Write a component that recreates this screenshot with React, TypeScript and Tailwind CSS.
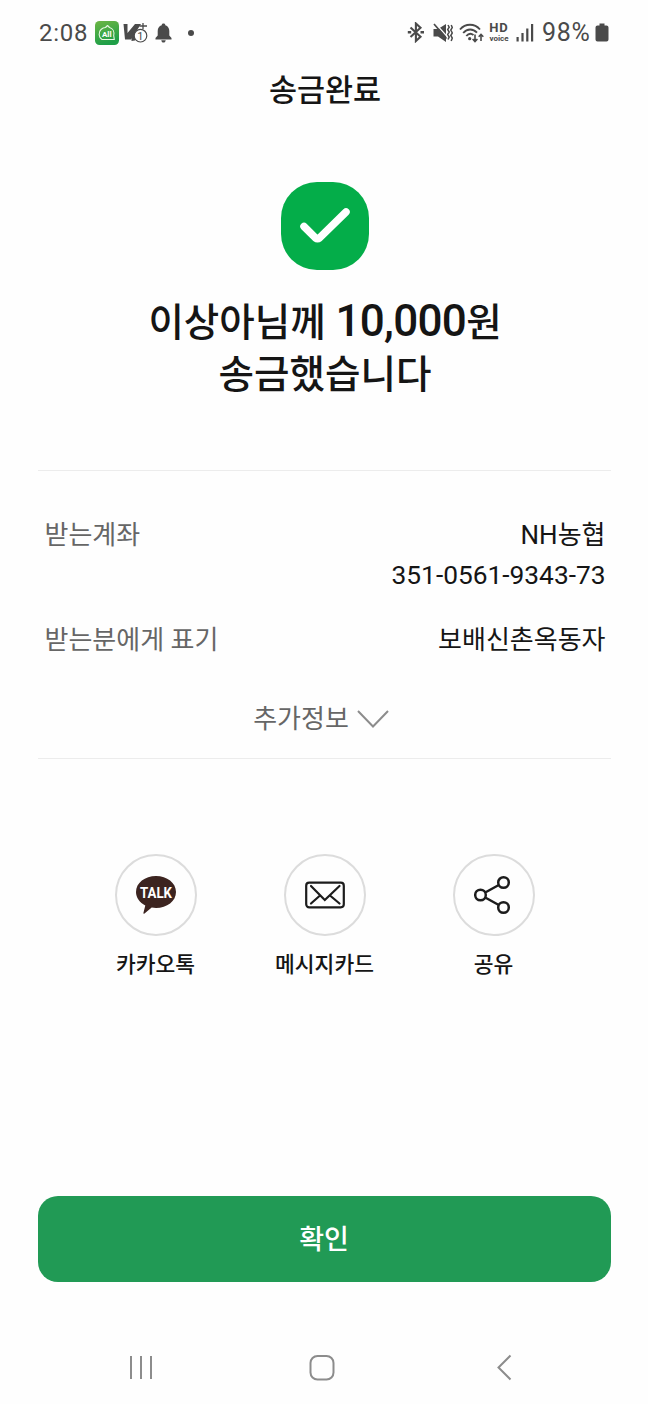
import type { ReactNode } from 'react'

function AllOneIcon() {
  return (
    <svg width="24" height="24" viewBox="0 0 24 24">
      <defs>
        <linearGradient id="allone" x1="0" y1="0" x2="0.3" y2="1">
          <stop offset="0" stopColor="#6db644" />
          <stop offset="1" stopColor="#1f9f48" />
        </linearGradient>
      </defs>
      <rect width="24" height="24" rx="4.5" fill="url(#allone)" />
      <path
        d="M7 18.500C3.500 16.500 3.300 11 6 8.500C7.500 7 9.500 6.500 10.500 6.500L12.500 4.500L14.500 6.500C18 7.500 19.500 11 18.700 14.500L19.300 18.500Z"
        fill="none"
        stroke="#eaf7e4"
        strokeWidth="1.1"
        strokeLinejoin="round"
      />
      <text
        x="11.800"
        y="15.500"
        textAnchor="middle"
        fill="#fff"
        fontSize="8"
        fontWeight="700"
        fontFamily="Roboto, sans-serif"
      >
        All
      </text>
    </svg>
  )
}

function VaccineIcon() {
  return (
    <svg width="25" height="24" viewBox="0 0 25 24" fill="#4a4a4a">
      <path d="M0.500 3H4.500V12L12 3H18L8 18.500H2Z" />
      <path d="M8.500 13L12 10.500V19.500L8.500 20Z" />
      <path d="M20 2V8M16.500 5H24" stroke="#4a4a4a" strokeWidth="1.300" />
      <circle cx="17.500" cy="14.700" r="6.300" fill="#fff" stroke="#4a4a4a" strokeWidth="1.200" />
      <text
        x="17.300"
        y="18.700"
        textAnchor="middle"
        fontSize="11"
        fontFamily="Roboto, sans-serif"
      >
        1
      </text>
    </svg>
  )
}

function BellIcon() {
  return (
    <svg width="17" height="20" viewBox="0 0 17 20" fill="#4a4a4a">
      <path d="M8.500 0.500C9.600 0.500 10.300 1.200 10.300 2.200C13 3 14.300 5.200 14.300 8V12.500L16.500 15V16.500H0.500V15L2.700 12.500V8C2.700 5.200 4 3 6.700 2.200C6.700 1.200 7.400 0.500 8.500 0.500ZM6.300 17.200H10.700C10.500 18.700 9.700 19.500 8.500 19.500S6.500 18.700 6.300 17.200Z" />
    </svg>
  )
}

function BluetoothIcon() {
  return (
    <svg width="18" height="21" viewBox="0 0 18 21" fill="none" stroke="#4a4a4a" strokeWidth="2.100">
      <path d="M3.500 5.500L13.500 14.800L8.900 19V1.500L13.500 5.700L3.500 15" />
      <path d="M0.800 10.300H4.200M13.500 10.300H17" strokeWidth="2.400" />
    </svg>
  )
}

function VibrateIcon() {
  return (
    <svg width="20" height="20" viewBox="0 0 20 20" fill="#4a4a4a">
      <path d="M0.500 6H5L13 1V19L5 13.500H0.500Z" />
      <path d="M2.500 0.500L14.500 14" stroke="#fefefe" strokeWidth="1.200" />
      <path d="M1 1L13.500 15.500" stroke="#4a4a4a" strokeWidth="1.700" />
      <path
        d="M15 2L16.200 4.200L14.700 6.500L16.200 9L14.700 11.500L16.200 14L15 16.500M18.200 2L19.300 4.500L17.800 7L19.300 10L17.800 12.500L19.300 15L18.200 18"
        fill="none"
        stroke="#4a4a4a"
        strokeWidth="1.500"
      />
    </svg>
  )
}

function WifiIcon() {
  return (
    <svg width="25" height="20" viewBox="0 0 25 20" fill="none" stroke="#4a4a4a">
      <path
        d="M1 6.500C6.500 0.200 15.500 0.200 21 6.500M4.200 10C8.200 5.300 14 5.300 18 9.700M7.300 13C9.500 10.400 12.200 10.200 14.500 12"
        strokeWidth="1.900"
      />
      <circle cx="10.700" cy="15.700" r="1.600" fill="#4a4a4a" stroke="none" />
      <path
        d="M16 11.500V18.500M13.600 16L16 18.500L18.400 16M22 18V11.300M19.700 13.700L22 11.300L24.300 13.700"
        strokeWidth="1.600"
      />
    </svg>
  )
}

function SignalIcon() {
  return (
    <svg width="18" height="19" viewBox="0 0 18 19" fill="#4a4a4a">
      <rect x="0.500" y="14" width="2.200" height="4.500" />
      <rect x="5.400" y="10" width="2.200" height="8.500" />
      <rect x="10.200" y="5.500" width="2.200" height="13" />
      <rect x="15" y="1" width="2.200" height="17.500" />
    </svg>
  )
}

function BatteryIcon() {
  return (
    <svg width="14" height="19" viewBox="0 0 14 19" fill="#4a4a4a">
      <path d="M4.500 0.500H9.500V2.500H11.500Q13.500 2.500 13.500 4.500V16.500Q13.500 18.500 11.500 18.500H2.500Q0.500 18.500 0.500 16.500V4.500Q0.500 2.500 2.500 2.500H4.500Z" />
    </svg>
  )
}

function StatusBar() {
  return (
    <div className="flex h-[65px] w-full shrink-0 items-center justify-between pr-[39px] pl-[39px] text-[24px] text-[#4a4a4a]">
      <div className="flex items-center">
        <span className="w-[56px] tracking-[0.7px]">2:08</span>
        <AllOneIcon />
        <div className="ml-1">
          <VaccineIcon />
        </div>
        <div className="ml-[7px]">
          <BellIcon />
        </div>
        <div className="ml-4 size-[6px] rounded-full bg-[#4a4a4a]" />
      </div>
      <div className="flex items-center">
        <BluetoothIcon />
        <div className="ml-2">
          <VibrateIcon />
        </div>
        <div className="ml-[6px]">
          <WifiIcon />
        </div>
        <div className="ml-1 flex w-[22px] flex-col items-center">
          <span className="text-[13px] leading-[12px] font-bold tracking-[1px]">HD</span>
          <span className="text-[8px] leading-[9px] font-bold">voice</span>
        </div>
        <div className="ml-[6px]">
          <SignalIcon />
        </div>
        <span className="ml-2 w-[53px] text-[25px] tracking-[0.7px]">98%</span>
        <BatteryIcon />
      </div>
    </div>
  )
}

function TalkIcon() {
  return (
    <svg width="42" height="40" viewBox="0 0 42 40">
      <path
        d="M21 1C32 1 41 7.800 41 17S32 33 21 33C19.500 33 18.100 32.900 16.700 32.600L9.200 38.800C8.600 39 8.300 38.700 8.400 38.100L10.300 30.500C4.700 27.500 1 22.600 1 17C1 7.800 10 1 21 1Z"
        fill="#3c2420"
      />
      <text
        x="21"
        y="22.500"
        textAnchor="middle"
        textLength="32"
        lengthAdjust="spacingAndGlyphs"
        fill="#fff"
        fontSize="15"
        fontWeight="700"
        fontFamily="Roboto, sans-serif"
      >
        TALK
      </text>
    </svg>
  )
}

function MailIcon() {
  return (
    <svg width="40" height="28" viewBox="0 0 40 28" fill="none" stroke="#1c1c1c" strokeWidth="2.200">
      <rect x="1.200" y="1.700" width="37.600" height="24.600" rx="3" />
      <path d="M6 5L19.800 19L34.500 5M15 14.500L6 22.500M25 14.500L34.500 22.500" strokeLinecap="round" />
    </svg>
  )
}

function ShareIcon() {
  return (
    <svg width="40" height="40" viewBox="0 0 40 40" fill="none" stroke="#1c1c1c" strokeWidth="2.500">
      <circle cx="6.500" cy="20" r="5.300" />
      <circle cx="29.500" cy="7.500" r="5.300" />
      <circle cx="29.500" cy="32.500" r="5.300" />
      <path d="M11.200 17.500L24.800 10M11.200 22.500L24.800 30" />
    </svg>
  )
}

function ShareButton({ label, children }: { label: string; children: ReactNode }) {
  return (
    <button className="flex w-[169px] flex-col items-center">
      <span className="flex size-[82px] items-center justify-center rounded-full border-2 border-[#dcdcdc]">
        {children}
      </span>
      <span className="mt-[13px] text-[21.500px] leading-8 font-medium text-[#151515]">{label}</span>
    </button>
  )
}

function NavigationBar() {
  return (
    <div className="mt-[68px] flex w-full items-center pl-[128px]">
      <svg width="26" height="36" viewBox="0 0 26 36" stroke="#8c8c8c" strokeWidth="2">
        <path d="M3 6V29M13 6V29M23 6V29" />
      </svg>
      <svg className="ml-[155px]" width="26" height="36" viewBox="0 0 26 36" fill="none" stroke="#8c8c8c" strokeWidth="2">
        <rect x="1.500" y="6" width="23" height="23.500" rx="7" />
      </svg>
      <svg className="ml-[161px]" width="16" height="36" viewBox="0 0 16 36" fill="none" stroke="#8c8c8c" strokeWidth="2">
        <path d="M14.500 5.500L2.500 17.500L14.500 29.500" />
      </svg>
    </div>
  )
}

export default function App() {
  return (
    <main className="flex h-[1404px] w-[648px] flex-col items-center overflow-hidden bg-[#fefefe] font-['Roboto','Noto_Sans_CJK_KR',sans-serif] text-[#151515]">
      <StatusBar />
      <h1 className="mt-px h-[50px] pl-0.5 text-[30.500px] leading-[50px] font-medium">송금완료</h1>

      <div className="mt-[66px] ml-0.5 flex size-[88px] shrink-0 items-center justify-center rounded-[36px] bg-[#04ad49]">
        <svg width="52" height="38" viewBox="0 0 52 38" fill="none">
          <path
            d="M5 19.500L16.500 31Q18.500 32.500 20.500 31L47 5"
            stroke="#fff"
            strokeWidth="7.500"
            strokeLinecap="round"
          />
        </svg>
      </div>

      <h2 className="mt-[27px] flex flex-col items-center pl-0.5 text-[38.600px] leading-[52px] font-medium">
        <span className="whitespace-pre">
          이상아님께 <span className="text-[44px] leading-none tracking-[-0.7px]">10,000</span>원
        </span>
        <span>송금했습니다</span>
      </h2>

      <section className="mt-[69px] flex h-[289px] w-[573px] shrink-0 flex-col border-y border-[#ececec] px-[6px] pt-[44px] text-[26px] leading-[41px]">
        <div className="flex justify-between">
          <span className="pl-px text-[#666]">받는계좌</span>
          <div className="-mr-px flex flex-col text-right">
            <span>NH농협</span>
            <span className="text-[26.300px] leading-[39px]">351-0561-9343-73</span>
          </div>
        </div>
        <div className="mt-[25px] flex justify-between">
          <span className="pl-px text-[#666]">받는분에게 표기</span>
          <span className="-mr-px">보배신촌옥동자</span>
        </div>
        <button className="mt-[38px] flex items-center justify-center gap-2 pr-[6px] text-[#666]">
          추가정보
          <svg width="32" height="20" viewBox="0 0 32 20" fill="none" stroke="#8c8c8c" strokeWidth="2">
            <path d="M1 1L16 16.500L31 1" />
          </svg>
        </button>
      </section>

      <div className="mt-[95px] ml-px flex">
        <ShareButton label="카카오톡">
          <TalkIcon />
        </ShareButton>
        <ShareButton label="메시지카드">
          <MailIcon />
        </ShareButton>
        <ShareButton label="공유">
          <ShareIcon />
        </ShareButton>
      </div>

      <button className="mt-[215px] h-[86px] w-[573px] shrink-0 rounded-[20px] bg-[#219a55] pt-0.5 text-[27px] font-medium text-white">
        확인
      </button>
      <NavigationBar />
    </main>
  )
}
